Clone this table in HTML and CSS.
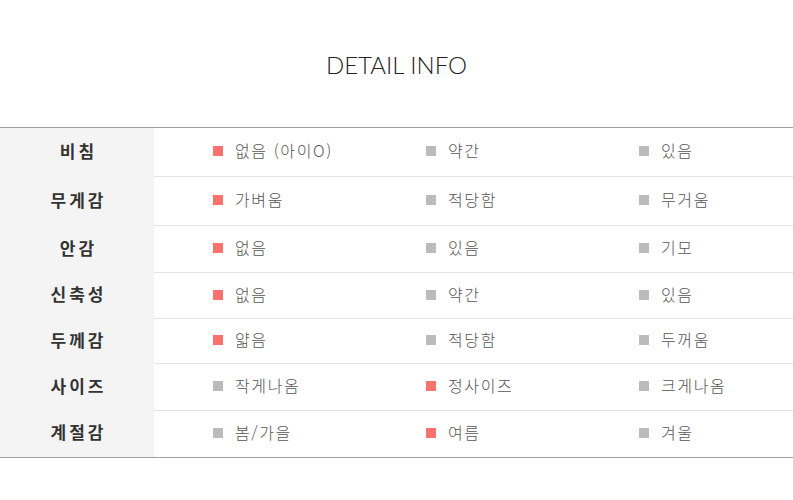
FILE: index.html
```html
<!DOCTYPE html>
<html lang="ko">
<head>
<meta charset="utf-8">
<link rel="stylesheet" href="styles.css">
</head>
<body>
<h2 class="title">DETAIL INFO</h2>
<table class="info">
  <tr><th>비침</th><td><span class="mk on"></span>없음 (아이O)</td><td><span class="mk"></span>약간</td><td><span class="mk"></span>있음</td></tr>
  <tr><th>무게감</th><td><span class="mk on"></span>가벼움</td><td><span class="mk"></span>적당함</td><td><span class="mk"></span>무거움</td></tr>
  <tr><th>안감</th><td><span class="mk on"></span>없음</td><td><span class="mk"></span>있음</td><td><span class="mk"></span>기모</td></tr>
  <tr><th>신축성</th><td><span class="mk on"></span>없음</td><td><span class="mk"></span>약간</td><td><span class="mk"></span>있음</td></tr>
  <tr><th>두께감</th><td><span class="mk on"></span>얇음</td><td><span class="mk"></span>적당함</td><td><span class="mk"></span>두꺼움</td></tr>
  <tr><th>사이즈</th><td><span class="mk"></span>작게나옴</td><td><span class="mk on"></span>정사이즈</td><td><span class="mk"></span>크게나옴</td></tr>
  <tr><th>계절감</th><td><span class="mk"></span>봄/가을</td><td><span class="mk on"></span>여름</td><td><span class="mk"></span>겨울</td></tr>
</table>
</body>
</html>
```
FILE: styles.css
```css
html, body {
  margin: 0;
  padding: 0;
  background: #fff;
}
body {
  font-family: "Noto Sans CJK KR", sans-serif;
}
.title {
  margin: 0;
  padding-top: 47px;
  height: 80px;
  line-height: 36px;
  text-align: center;
  font-family: "Lato", "Noto Sans", sans-serif;
  font-weight: 300;
  font-size: 24px;
  color: #222;
}
.info {
  width: 793px;
  border-collapse: collapse;
  table-layout: fixed;
  border-top: 1px solid #a0a0a0;
  border-bottom: 1px solid #a0a0a0;
}
.info th {
  box-sizing: border-box;
  width: 154px;
  padding: 0 0 4px 3px;
  background: #f4f4f4;
  font-size: 17px;
  font-weight: 700;
  color: #333;
  letter-spacing: 3px;
  text-align: center;
}
.info td {
  padding: 0 0 4px 59px;
  font-size: 16px;
  font-weight: 300;
  color: #555;
  letter-spacing: 1.6px;
  border-bottom: 1px solid #e2e2e2;
  white-space: nowrap;
}
.info tr:last-child td {
  border-bottom: none;
}
.info tr:nth-child(1) { height: 49px; }
.info tr:nth-child(2) { height: 49px; }
.info tr:nth-child(3) { height: 47px; }
.info tr:nth-child(4) { height: 46px; }
.info tr:nth-child(5) { height: 45px; }
.info tr:nth-child(6) { height: 47px; }
.info tr:nth-child(7) { height: 47px; }
.mk {
  display: inline-block;
  width: 10px;
  height: 10px;
  background: #bbbbbb;
  margin-right: 12px;
  vertical-align: 1px;
}
.mk.on {
  background: #fb716e;
}
```
